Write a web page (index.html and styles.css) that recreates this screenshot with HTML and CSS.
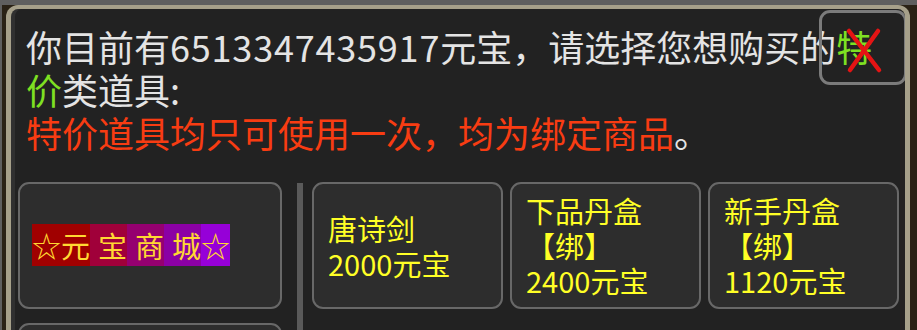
FILE: index.html
```html
<!DOCTYPE html>
<html lang="zh-CN">
<head>
  <meta charset="UTF-8" />
  <meta name="viewport" content="width=device-width, initial-scale=1.0"/>
  <title>元宝商城 - 特价道具</title>
  <link rel="stylesheet" href="styles.css">
</head>
<body>

  <div class="frame">
    <div class="panel">

      <div class="msg">
        <p class="line">你目前有<span class="num">6513347435917</span>元宝，请选择您想购买的<span class="hot">特</span><br><span class="hot">价</span>类道具:</p>
        <p class="line warn">特价道具均只可使用一次，均为绑定商品<span class="plain">。</span></p>
      </div>

      <button class="close" title="关闭">
        <svg width="88" height="75" viewBox="0 0 88 75">
          <path d="M30 21 L60 60" stroke="#e41414" stroke-width="4.5" stroke-linecap="round"/>
          <path d="M59 21 L31 60" stroke="#e41414" stroke-width="4.5" stroke-linecap="round"/>
        </svg>
      </button>

      <div class="shop">
        <div class="tabs">
          <div class="card tab">
            <span class="banner"><span class="b1">☆元</span><span class="b2"> 宝</span><span class="b3"> 商</span><span class="b4"> 城</span><span class="b5">☆</span></span>
          </div>
          <div class="card tab"></div>
        </div>

        <div class="divider"></div>

        <div class="items">
          <div class="card item"><div class="name">唐诗剑<br>2000元宝</div></div>
          <div class="card item"><div class="name">下品丹盒<br>【绑】<br>2400元宝</div></div>
          <div class="card item"><div class="name">新手丹盒<br>【绑】<br>1120元宝</div></div>
        </div>
      </div>

    </div>
  </div>

</body>
</html>
```

FILE: styles.css
```css
body {
  margin: 0;
  height: 330px;
  overflow: hidden;
  background-color: #5f5f5f;
  font-family: "Noto Sans CJK SC", "Noto Sans", sans-serif;
}
.frame {
  margin: 5px 0 0 2px;
  height: 325px;
  padding: 0 7px 0 4px;
  background-color: #2a2216;
}
.panel {
  position: relative;
  height: 100%;
  box-sizing: border-box;
  background-color: #222;
  border: 5px solid #a6a08a;
  border-top-width: 4px;
  border-bottom: none;
  border-radius: 12px 12px 0 0;
  box-shadow: inset 4px 0 0 #303030;
  overflow: hidden;
}
.msg {
  padding: 16px 0 0 15px;
}
.line {
  margin: 0;
  font-size: 36px;
  line-height: 43px;
  color: #e4e4e4;
}
.num {
  letter-spacing: 0.8px;
}
.hot {
  color: #7fe022;
}
.warn {
  color: #f83c12;
}
.plain {
  color: #e4e4e4;
}
.close {
  position: absolute;
  left: 808px;
  top: 1px;
  width: 88px;
  height: 75px;
  box-sizing: border-box;
  padding: 0;
  border: 3px solid #7b7b7b;
  border-radius: 11px;
  background: transparent;
  cursor: pointer;
}
.close svg {
  display: block;
  margin: -3px;
}
.shop {
  display: flex;
  margin-top: 28px;
  padding-left: 7px;
}
.tabs {
  flex: none;
  width: 264px;
  display: flex;
  flex-direction: column;
  gap: 14px;
}
.card {
  box-sizing: border-box;
  height: 127px;
  border: 2px solid #686868;
  border-radius: 11px;
  background-color: #2d2d2d;
}
.tab {
  display: flex;
  align-items: center;
  padding-left: 12px;
}
.banner {
  font-size: 29px;
  line-height: 39px;
  color: #ffd832;
  white-space: pre;
  word-spacing: 1.5px;
}
.b1 { background-color: #a00000; }
.b2 { background-color: #a0003a; }
.b3 { background-color: #950070; }
.b4 { background-color: #8b00a5; }
.b5 { background-color: #9600d8; }
.divider {
  flex: none;
  width: 6px;
  margin: 1px 9px 0 15px;
  background-color: #5a5a5a;
}
.items {
  display: flex;
  gap: 7px;
  align-items: flex-start;
}
.item {
  width: 191px;
  padding-left: 14px;
  display: flex;
  align-items: center;
}
.name {
  font-size: 29px;
  line-height: 35px;
  color: #ffff26;
}
```
